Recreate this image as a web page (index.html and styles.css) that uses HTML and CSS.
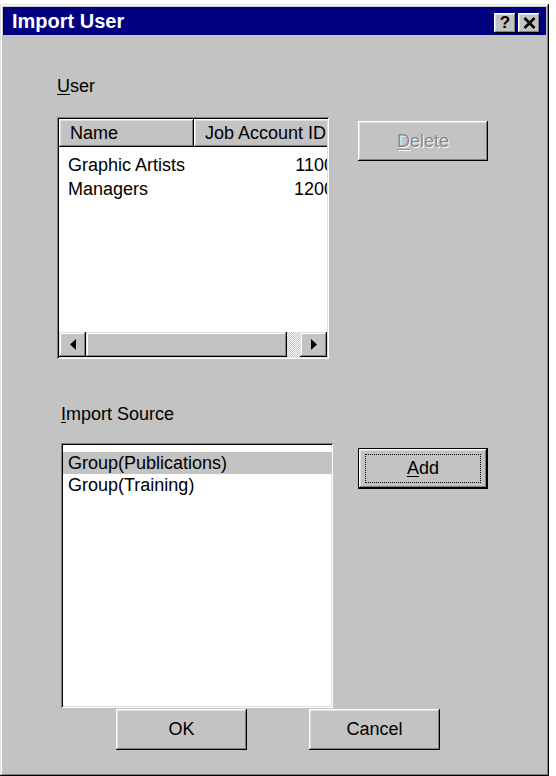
FILE: index.html
```html
<!DOCTYPE html>
<html lang="en">
<head>
  <meta charset="UTF-8">
  <title>Import User</title>
  <meta name="viewport" content="width=device-width, initial-scale=1.0">
  <link rel="stylesheet" href="styles.css">
</head>
<body>
  <div class="window">
    <div class="titlebar">
      <span class="title">Import User</span>
      <div class="title-buttons">
        <button class="tbtn">?</button>
        <button class="tbtn">
          <svg width="13" height="12" viewBox="0 0 13 12"><path d="M1.5 1 L11.5 11 M11.5 1 L1.5 11" stroke="#000" stroke-width="2.6" fill="none"/></svg>
        </button>
      </div>
    </div>

    <div class="dialog-body">
      <!-- users already defined -->
      <div class="group">
        <div class="label"><u>U</u>ser</div>
        <div class="group-row">
          <div class="listview">
            <div class="lv-inner">
              <div class="lv-header">
                <div class="lv-col">Name</div>
                <div class="lv-col">Job Account ID</div>
              </div>
              <div class="lv-rows">
                <div class="lv-row"><span class="c-name">Graphic Artists</span><span class="c-id">1100</span></div>
                <div class="lv-row"><span class="c-name">Managers</span><span class="c-id">1200</span></div>
              </div>
              <div class="hscroll">
                <div class="sb-btn">
                  <svg width="6" height="11" viewBox="0 0 6 11"><polygon points="6,0 6,11 0,5.5" fill="#000"/></svg>
                </div>
                <div class="sb-thumb"></div>
                <div class="sb-track"></div>
                <div class="sb-btn">
                  <svg width="6" height="11" viewBox="0 0 6 11"><polygon points="0,0 0,11 6,5.5" fill="#000"/></svg>
                </div>
              </div>
            </div>
          </div>
          <button class="btn btn-delete" disabled><u>D</u>elete</button>
        </div>
      </div>

      <!-- groups to import from -->
      <div class="group group-source">
        <div class="label"><u>I</u>mport Source</div>
        <div class="group-row">
          <div class="listbox">
            <div class="lb-item selected">Group(Publications)</div>
            <div class="lb-item">Group(Training)</div>
          </div>
          <button class="btn btn-default"><span class="focus"><u>A</u>dd</span></button>
        </div>
      </div>

      <div class="dialog-buttons">
        <button class="btn">OK</button>
        <button class="btn">Cancel</button>
      </div>
    </div>
  </div>
</body>
</html>
```

FILE: styles.css
```css
:root {
  --face: #c3c3c3;
  --light: #dfdfdf;
  --shadow: #808080;
  --navy: #000080;
}

* {
  box-sizing: border-box;
}

body {
  margin: 0;
  background: #fff;
  font-family: "Liberation Sans", Arial, sans-serif;
  font-size: 18px;
  color: #000;
}

u {
  text-decoration: underline;
  text-underline-offset: 2px;
}

.window {
  width: 549px;
  height: 772px;
  margin-top: 4px;
  padding: 3px;
  background: var(--face);
  box-shadow: inset -1px -1px #000, inset 1px 1px var(--light), inset -2px -2px var(--shadow), inset 2px 2px #fff;
}

/* title bar */
.titlebar {
  height: 28px;
  background: var(--navy);
  color: #fff;
  display: flex;
  align-items: center;
  justify-content: space-between;
  padding: 0 6px 0 9px;
}

.title {
  font-weight: bold;
  font-size: 20px;
}

.title-buttons {
  display: flex;
  gap: 2px;
  margin-top: 3px;
}

.tbtn {
  width: 22px;
  height: 20px;
  padding: 0;
  border: none;
  background: var(--face);
  font-family: "Liberation Sans", Arial, sans-serif;
  font-weight: bold;
  font-size: 17px;
  line-height: 20px;
  display: flex;
  align-items: center;
  justify-content: center;
  box-shadow: inset -1px -1px #000, inset 1px 1px #fff, inset -2px -2px var(--shadow), inset 2px 2px var(--light);
}

/* body */
.dialog-body {
  padding: 41px 0 0 54px;
}

.label {
  line-height: 20px;
  height: 20px;
}

.group-row {
  display: flex;
  align-items: flex-start;
  gap: 29px;
  margin-top: 21px;
}

.group-source {
  margin-top: 45px;
}

.group-source .label {
  margin-left: 4px;
}

.group-source .group-row {
  margin-top: 19px;
  gap: 25px;
}

/* buttons */
.btn {
  width: 130px;
  height: 40px;
  padding: 0;
  border: none;
  background: var(--face);
  font-family: "Liberation Sans", Arial, sans-serif;
  font-size: 18px;
  color: #000;
  box-shadow: inset -1px -1px #000, inset 1px 1px #fff, inset -2px -2px var(--shadow), inset 2px 2px var(--light);
}

.btn-delete {
  margin-top: 4px;
  color: #8a8a8a;
  text-shadow: 1px 1px #fff;
}

.btn-default {
  margin-top: 5px;
  height: 41px;
  padding: 5px 6px;
  border: 1px solid #000;
}

.focus {
  display: flex;
  align-items: center;
  justify-content: center;
  height: 100%;
  border: 1px dotted #000;
}

.dialog-buttons {
  display: flex;
  gap: 62px;
  margin: 1px 0 0 59px;
}

.dialog-buttons .btn {
  width: 131px;
  height: 41px;
}

/* list view with columns */
.listview {
  width: 272px;
  height: 242px;
  padding: 2px;
  background: #fff;
  box-shadow: inset 1px 1px var(--shadow), inset -1px -1px #fff, inset 2px 2px #000, inset -2px -2px var(--light);
}

.lv-inner {
  height: 100%;
  display: flex;
  flex-direction: column;
  overflow: hidden;
}

.lv-header {
  display: flex;
  height: 28px;
  flex-shrink: 0;
}

.lv-col {
  width: 135px;
  flex-shrink: 0;
  padding-left: 11px;
  line-height: 28px;
  white-space: nowrap;
  background: var(--face);
  box-shadow: inset -1px -1px #000, inset 1px 1px #fff, inset -2px -2px var(--shadow), inset 2px 2px var(--light);
}

.lv-rows {
  flex: 1;
  padding-top: 6px;
}

.lv-row {
  display: flex;
  height: 24px;
  line-height: 24px;
  white-space: nowrap;
}

.c-name {
  width: 135px;
  flex-shrink: 0;
  padding-left: 9px;
}

/* the id column runs past the visible edge and gets clipped */
.c-id {
  width: 140px;
  flex-shrink: 0;
  text-align: right;
}

.hscroll {
  display: flex;
  height: 25px;
  flex-shrink: 0;
}

.sb-btn, .sb-thumb {
  background: var(--face);
  box-shadow: inset -1px -1px #000, inset 1px 1px var(--light), inset -2px -2px var(--shadow), inset 2px 2px #fff;
}

.sb-btn {
  width: 27px;
  display: flex;
  align-items: center;
  justify-content: center;
}

.sb-thumb {
  width: 201px;
}

.sb-track {
  width: 13px;
  background: repeating-conic-gradient(#fff 0 25%, var(--face) 0 50%) 0 0 / 2px 2px;
}

/* plain list box */
.listbox {
  width: 272px;
  height: 265px;
  margin-left: 4px;
  padding: 9px 1px 0 2px;
  background: #fff;
  box-shadow: inset 1px 1px var(--shadow), inset -1px -1px #fff, inset 2px 2px #000, inset -2px -2px var(--light);
}

.lb-item {
  height: 22px;
  line-height: 22px;
  padding-left: 5px;
  white-space: nowrap;
}

.lb-item.selected {
  background: var(--face);
}
```
